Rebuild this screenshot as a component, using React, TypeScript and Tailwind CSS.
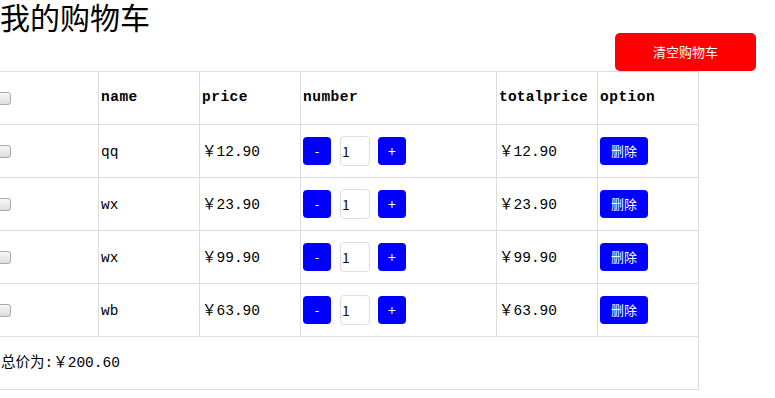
import React, { useState } from 'react';

const mono = "font-['Liberation_Mono','Noto_Sans_CJK_SC',monospace]";
const cjk = "font-['Noto_Sans_CJK_SC',sans-serif]";

const Check = () => (
  <input
    type="checkbox"
    className="ml-[-4px] block w-[13px] h-[13px] appearance-none border border-[#a9a9a9] rounded-[3px] bg-gradient-to-b from-[#f7f7f7] to-[#dedede]"
  />
);

const App = () => {
  const [items] = useState([
    { name: 'qq', price: 12.9, count: 1 },
    { name: 'wx', price: 23.9, count: 1 },
    { name: 'wx', price: 99.9, count: 1 },
    { name: 'wb', price: 63.9, count: 1 },
  ]);

  const total = items.reduce((sum, it) => sum + it.price * it.count, 0);
  const cell = 'border border-[#dddddd] px-[2px] align-middle';

  return (
    <div className="w-[775px] h-[398px] overflow-hidden bg-white text-black">
      <h1 className={`${cjk} text-[30px] leading-[40px] mt-[-4px] mb-[-3px] font-normal`}>我的购物车</h1>
      <div className="flex justify-end pr-[19px]">
        <button className={`${cjk} w-[141px] h-[38px] bg-[#ff0000] text-white text-[13px] rounded-[5px]`}>
          清空购物车
        </button>
      </div>
      <table className="table-fixed border-collapse ml-[-1px] text-[14.5px]">
        <thead>
          <tr className="h-[53px]">
            <th className={`${cell} w-[99px] text-left`}>
              <Check />
            </th>
            {['name', 'price'].map((h) => (
              <th key={h} className={`${cell} ${mono} w-[101px] text-left font-bold tracking-[0.5px]`}>{h}</th>
            ))}
            <th className={`${cell} ${mono} w-[196px] text-left font-bold tracking-[0.5px]`}>number</th>
            <th className={`${cell} ${mono} w-[101px] text-left font-bold tracking-[0.2px]`}>totalprice</th>
            <th className={`${cell} ${mono} w-[101px] text-left font-bold tracking-[0.5px]`}>option</th>
          </tr>
        </thead>
        <tbody>
          {items.map((it, i) => (
            <tr key={i} className="h-[53px]">
              <td className={cell}>
                <Check />
              </td>
              <td className={`${cell} ${mono} pt-[3px]`}>{it.name}</td>
              <td className={`${cell} ${mono} pt-[3px]`}>￥{it.price.toFixed(2)}</td>
              <td className={cell}>
                <div className="flex items-center">
                  <button className={`${cjk} w-[28px] h-[28px] bg-[#0000ff] text-white text-[13px] rounded-[4px]`}>-</button>
                  <input
                    readOnly
                    value={it.count}
                    className={`${cjk} ml-[9px] w-[30px] h-[30px] border border-[#dddddd] rounded-[4px] px-[1px] text-[14px] text-[#111] outline-none`}
                  />
                  <button className={`${cjk} ml-[8px] w-[28px] h-[28px] bg-[#0000ff] text-white text-[14px] rounded-[4px]`}>+</button>
                </div>
              </td>
              <td className={`${cell} ${mono} pt-[3px]`}>￥{(it.price * it.count).toFixed(2)}</td>
              <td className={cell}>
                <button className={`${cjk} w-[48px] h-[28px] bg-[#0000ff] text-white text-[13px] rounded-[4px]`}>删除</button>
              </td>
            </tr>
          ))}
          <tr className="h-[53px]">
            <td colSpan={6} className={`${cell} ${mono} pl-[1px] pt-[2px]`}>总价为:￥{total.toFixed(2)}</td>
          </tr>
        </tbody>
      </table>
    </div>
  );
};

export default App;
